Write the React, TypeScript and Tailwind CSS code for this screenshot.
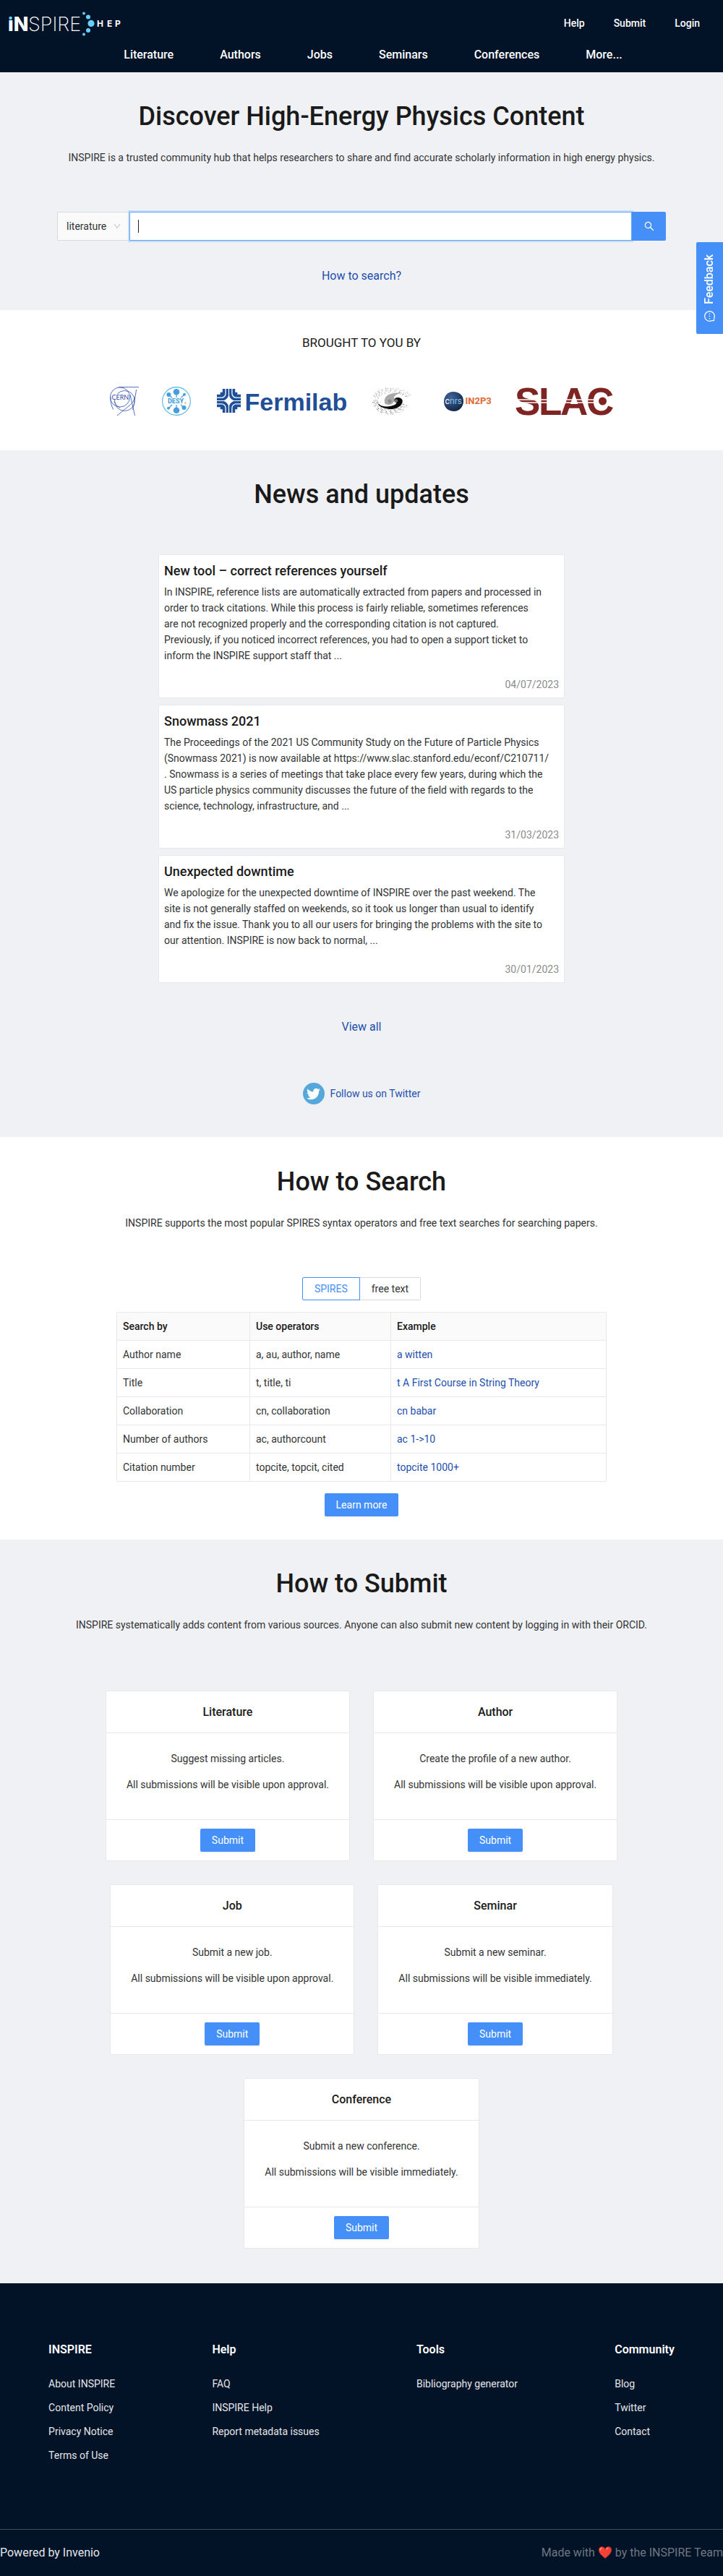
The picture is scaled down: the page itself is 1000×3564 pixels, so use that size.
import React from 'react';
import { AiOutlineDown, AiOutlineMessage, AiOutlineSearch } from 'react-icons/ai';
import { FaTwitter } from 'react-icons/fa';

const NAV = ['Literature', 'Authors', 'Jobs', 'Seminars', 'Conferences'];

const NEWS = [
  {
    title: 'New tool – correct references yourself',
    lines: [
      'In INSPIRE, reference lists are automatically extracted from papers and processed in',
      'order to track citations. While this process is fairly reliable, sometimes references',
      'are not recognized properly and the corresponding citation is not captured.',
      'Previously, if you noticed incorrect references, you had to open a support ticket to',
      'inform the INSPIRE support staff that ...',
    ],
    date: '04/07/2023',
  },
  {
    title: 'Snowmass 2021',
    lines: [
      'The Proceedings of the 2021 US Community Study on the Future of Particle Physics',
      '(Snowmass 2021) is now available at https://www.slac.stanford.edu/econf/C210711/',
      '. Snowmass is a series of meetings that take place every few years, during which the',
      'US particle physics community discusses the future of the field with regards to the',
      'science, technology, infrastructure, and ...',
    ],
    date: '31/03/2023',
  },
  {
    title: 'Unexpected downtime',
    lines: [
      'We apologize for the unexpected downtime of INSPIRE over the past weekend. The',
      'site is not generally staffed on weekends, so it took us longer than usual to identify',
      'and fix the issue. Thank you to all our users for bringing the problems with the site to',
      'our attention. INSPIRE is now back to normal, ...',
    ],
    date: '30/01/2023',
  },
];

const OPERATORS = [
  ['Author name', 'a, au, author, name', 'a witten'],
  ['Title', 't, title, ti', 't A First Course in String Theory'],
  ['Collaboration', 'cn, collaboration', 'cn babar'],
  ['Number of authors', 'ac, authorcount', 'ac 1->10'],
  ['Citation number', 'topcite, topcit, cited', 'topcite 1000+'],
];

const SUBMISSIONS = [
  { title: 'Literature', text: 'Suggest missing articles.', when: 'upon approval' },
  { title: 'Author', text: 'Create the profile of a new author.', when: 'upon approval' },
  { title: 'Job', text: 'Submit a new job.', when: 'upon approval' },
  { title: 'Seminar', text: 'Submit a new seminar.', when: 'immediately' },
  { title: 'Conference', text: 'Submit a new conference.', when: 'immediately' },
];

const FOOTER = [
  { title: 'INSPIRE', links: ['About INSPIRE', 'Content Policy', 'Privacy Notice', 'Terms of Use'] },
  { title: 'Help', links: ['FAQ', 'INSPIRE Help', 'Report metadata issues'] },
  { title: 'Tools', links: ['Bibliography generator'] },
  { title: 'Community', links: ['Blog', 'Twitter', 'Contact'] },
];

function InspireLogo() {
  return (
    <svg width="160" height="34" viewBox="0 -1 160 34" className="overflow-visible" role="img" aria-label="INSPIRE HEP">
      <g fill="#fff" fontFamily="Inter, sans-serif">
        <text x="-1" y="27" fontSize="27" fontWeight="800">iN</text>
        <text x="27" y="27" fontSize="27" fontWeight="200">SPIRE</text>
        <g fontSize="12" fontWeight="700">
          <text x="122" y="21">H</text>
          <text x="136" y="21">E</text>
          <text x="147" y="21">P</text>
        </g>
      </g>
      <rect x="-1" y="4" width="8" height="7" fill="#021227" />
      <g fill="#66cffc">
        <circle cx="2.6" cy="9" r="2.3" />
        <circle cx="104" cy="2.5" r="1.9" />
        <circle cx="110" cy="7.5" r="3" />
        <circle cx="114" cy="16.4" r="4.6" />
        <circle cx="110" cy="26" r="3" />
        <circle cx="104" cy="31.5" r="1.9" />
      </g>
    </svg>
  );
}

function CernLogo() {
  return (
    <svg width="36" height="40" viewBox="0 0 36 40" className="overflow-visible" role="img" aria-label="CERN">
      <g fill="none" stroke="#4560b4" strokeWidth="0.9">
        <circle cx="14" cy="14.5" r="13.6" />
        <circle cx="20.5" cy="19.5" r="14" />
        <path d="M12 0.6H40" />
        <path d="M1 14C0.6 21 2 26 4.6 31.5" />
        <path d="M36.6 4L33.6 22C32.5 28 32 30 31.5 32" />
        <path d="M28 11L34.5 40" />
        <path d="M10 40L27 26C32 22 34 18 33.8 14" />
        <path d="M6 20C8 25 10 27 14 29" />
      </g>
      <rect x="3" y="10" width="22" height="8" fill="#fff" />
      <text x="2.5" y="17.5" fontSize="9" fontFamily="Lato, sans-serif" fill="#2f4aa6">CERN</text>
    </svg>
  );
}

function DesyLogo() {
  return (
    <svg width="40" height="40" viewBox="0 0 40 40" role="img" aria-label="DESY">
      <circle cx="20" cy="20" r="19.4" fill="#fff" stroke="#4fb4e4" strokeWidth="1.1" />
      <path
        d="M20 8V15M9.500 11L14 15.500M31 11L26.500 15M20 32V25M9.500 29.500L14 25M30.500 29L26 25"
        stroke="#469fdc"
        strokeWidth="1.3"
      />
      <g fill="#469fdc">
        <circle cx="20" cy="7.3" r="4.3" />
        <circle cx="9.4" cy="11" r="3" />
        <circle cx="31" cy="10.7" r="2" />
        <circle cx="20" cy="32.7" r="4.3" />
        <circle cx="9" cy="29.7" r="2" />
        <circle cx="30.5" cy="29" r="3" />
        <text x="8" y="23.4" fontSize="9" fontWeight="800" fontFamily="Roboto, sans-serif">DESY</text>
      </g>
      <circle cx="32.3" cy="22.6" r="1" fill="#f08a24" />
    </svg>
  );
}

function FermilabLogo() {
  const quadrants = ['scale(1 1)', 'scale(-1 1)', 'scale(1 -1)', 'scale(-1 -1)'];
  return (
    <svg width="179" height="40" viewBox="0 0 179 40" className="overflow-visible" role="img" aria-label="Fermilab">
      <g transform="translate(16.5 19.5)">
        {quadrants.map((t) => (
          <g key={t} transform={t}>
            <path d="M-16.5 -0.6V-8.7H-11.8V-11.8H-8.7V-16.5H-0.6V-0.6Z" fill="#1f4f96" />
            <path d="M-17 -4.4H-10C-7 -4.4 -4.4 -7 -4.4 -10V-17" fill="none" stroke="#fff" strokeWidth="1.3" />
          </g>
        ))}
        <path d="M-8.5 0C-3.5 -1.5 -1.5 -3.5 0 -8.5C1.5 -3.5 3.5 -1.5 8.5 0C3.5 1.5 1.5 3.5 0 8.5C-1.5 3.5 -3.5 1.5 -8.5 0Z" fill="#fff" />
      </g>
      <text x="38.5" y="32.5" fontSize="34" fontWeight="700" fontFamily="Liberation Sans, sans-serif" fill="#1f4f96">
        Fermilab
      </text>
    </svg>
  );
}

const SPECKLES = Array.from({ length: 260 }, (_, i) => {
  const lower = i % 2 === 1;
  const t = ((i * 37) % 100) / 100;
  const spread = ((i * 53) % 29) / 29;
  const angle = lower ? Math.PI * (1.05 - t * 0.95) : Math.PI * (1.1 + t * 0.75);
  const rx = 17 + spread * 8 + (lower ? 0 : t * 9);
  const ry = 11 + spread * 8;
  return {
    x: 25 + Math.cos(angle) * rx,
    y: 20 + Math.sin(angle) * ry,
    r: 0.25 + ((i * 17) % 5) / 14,
    fill: lower || i % 3 === 0 ? '#444' : '#aaa',
  };
});

function IhepLogo() {
  return (
    <svg width="63" height="40" viewBox="0 0 63 40" role="img" aria-label="IHEP">
      {SPECKLES.map((s, i) => (
        <circle key={i} cx={s.x} cy={s.y} r={s.r} fill={s.fill} />
      ))}
      <path d="M17 22C15 12 26 7 42 9C36 9.500 31 11 30 15C32 19 29 25 23 25C19 25 17 24 17 22Z" fill="#a9a9a9" />
      <circle cx="24" cy="20" r="2.6" fill="#8a8a8a" />
      <path d="M7 23C14 29 24 28 31 25C34 23 34 22 31 21C29 17 32 14.500 36 15C41 15.500 43 19 41 23C38 30 27 33 18 30C12 28.500 9 26 7 23Z" fill="#0b0b0b" />
      <circle cx="33" cy="19.5" r="2.2" fill="#777" />
    </svg>
  );
}

function In2p3Logo() {
  return (
    <svg width="65" height="40" viewBox="0 0 65 40" className="overflow-visible" role="img" aria-label="CNRS IN2P3">
      <defs>
        <radialGradient id="cnrs" cx="35%" cy="30%" r="75%">
          <stop offset="0" stopColor="#41659a" />
          <stop offset="1" stopColor="#122548" />
        </radialGradient>
      </defs>
      <path d="M13 7C21 7 27 12 27 20C27 28 21 34 14 34C6 34 0 29 0 20.500C0 13 5 7 13 7Z" fill="url(#cnrs)" />
      <g fontFamily="Roboto, sans-serif" fontSize="12">
        <text x="1.5" y="24" fill="#fff">c</text>
        <text x="8" y="24" fill="#7fc0e8">nrs</text>
      </g>
      <text x="29.5" y="24" fontSize="13" fontWeight="700" fontFamily="Roboto, sans-serif" fill="#df6a35">IN2P3</text>
    </svg>
  );
}

function SlacLogo() {
  return (
    <svg width="134" height="40" viewBox="0 0 134 40" className="overflow-visible" role="img" aria-label="SLAC">
      <g fontFamily="Liberation Sans, sans-serif" fontSize="53" fontWeight="700" fill="#7e2422">
        <text x="-3" y="38.5">S</text>
        <text x="30" y="38.5">L</text>
        <text x="60" y="38.5">A</text>
        <text x="96" y="38.5">C</text>
      </g>
      <path d="M0 18H106M0 22H106" stroke="#fff" strokeWidth="1.3" />
      <circle cx="118.5" cy="20" r="5.5" fill="#7e2422" />
    </svg>
  );
}

function Heading({ as: Tag = 'h2', children }: { as?: 'h1' | 'h2'; children: React.ReactNode }) {
  return <Tag className="text-center text-4xl leading-[44px] font-medium text-[#1a1a1a]">{children}</Tag>;
}

function Intro({ children }: { children: React.ReactNode }) {
  return <p className="mt-6 text-center">{children}</p>;
}

const primary =
  'inline-flex h-8 items-center rounded-xs bg-[#4590f8] px-4 text-sm text-white shadow-[0_2px_0_rgba(0,0,0,0.04)]';

export default function App() {
  return (
    <div className="bg-white font-[Roboto,sans-serif] text-sm leading-[22px] text-[#333436]">
      <header className="bg-[#021227] pb-3 text-white">
        <div className="flex h-16 items-center justify-between pr-8 pl-3">
          <a href="#home">
            <InspireLogo />
          </a>
          <div className="flex gap-10 font-medium">
            <a href="#help">Help</a>
            <a href="#submit">Submit</a>
            <a href="#login">Login</a>
          </div>
        </div>
        <nav className="flex justify-center gap-16 pl-8 text-base leading-6 font-medium">
          {NAV.map((n) => (
            <a key={n} href={`#${n.toLowerCase()}`}>
              {n}
            </a>
          ))}
          <a href="#more">More...</a>
        </nav>
      </header>

      <main>
        <section className="bg-[#f0f1f5] px-4 pt-[39px] pb-[35px]">
          <Heading as="h1">Discover High-Energy Physics Content</Heading>
          <Intro>
            INSPIRE is a trusted community hub that helps researchers to share and find accurate scholarly information
            in high energy physics.
          </Intro>
          <form className="mx-auto mt-16 flex h-10 max-w-[842px]" onSubmit={(e) => e.preventDefault()}>
            <div className="relative w-[100px]">
              <select
                aria-label="Collection"
                className="h-full w-full appearance-none rounded-l-xs border border-r-0 border-[#d9d9d9] bg-[#fafafa] pl-3 outline-none"
              >
                <option>literature</option>
              </select>
              <AiOutlineDown className="pointer-events-none absolute top-[14px] right-[11px] size-3 text-[#bfbfbf]" />
            </div>
            <div className="relative z-10 flex-1">
              <input
                type="text"
                aria-label="Search"
                className="h-full w-full border border-[#5aa5f8] bg-white px-3 shadow-[0_0_0_2px_#c8dcf4] outline-none"
              />
              <span className="pointer-events-none absolute top-[11px] left-3 h-[18px] w-px bg-[#222]" />
            </div>
            <button
              type="submit"
              aria-label="Run search"
              className="z-10 flex w-[47px] items-center justify-center rounded-r-xs bg-[#4590f8] text-white"
            >
              <AiOutlineSearch className="size-4" />
            </button>
          </form>
          <p className="mt-[37px] text-center text-base leading-6">
            <a href="#how-to-search" className="text-[#1d4fae]">
              How to search?
            </a>
          </p>
        </section>

        <section className="pt-[33px] pb-12">
          <p className="text-center text-[17px] leading-6 text-[#1a1a1a]">BROUGHT TO YOU BY</p>
          <div className="mt-[49px] flex flex-wrap justify-center gap-9">
            <CernLogo />
            <DesyLogo />
            <FermilabLogo />
            <IhepLogo />
            <In2p3Logo />
            <SlacLogo />
          </div>
        </section>

        <section className="bg-[#f0f1f5] pt-[39px] pb-[45px]">
          <Heading>News and updates</Heading>
          <div className="mx-auto mt-[61px] flex max-w-[562px] flex-col gap-[9px]">
            {NEWS.map((n) => (
              <article key={n.title} className="rounded-xs border border-[#e8e8e8] bg-white px-[7px] pt-[10px] pb-[7px]">
                <h3 className="text-lg leading-6 font-medium text-[#1a1a1a]">{n.title}</h3>
                <p className="mt-[6px] whitespace-pre-line">{n.lines.join('\n')}</p>
                <p className="mt-[18px] text-right text-[#8c8c8c]">{n.date}</p>
              </article>
            ))}
          </div>
          <p className="mt-[49px] text-center text-base leading-6">
            <a href="#news" className="text-[#1d4fae]">
              View all
            </a>
          </p>
          <p className="mt-[65px] flex justify-center">
            <a href="#twitter" className="flex items-center gap-2 text-[#1d4fae]">
              <span className="flex size-[30px] items-center justify-center rounded-full bg-[#55a7dc] text-white">
                <FaTwitter className="size-[19px]" />
              </span>
              Follow us on Twitter
            </a>
          </p>
        </section>

        <section id="how-to-search" className="px-4 pt-10 pb-8">
          <Heading>How to Search</Heading>
          <Intro>
            INSPIRE supports the most popular SPIRES syntax operators and free text searches for searching papers.
          </Intro>
          <div className="mt-16 flex justify-center">
            <button type="button" className="h-8 rounded-l-xs border border-[#4590f8] px-4 text-[#4590f8]">
              SPIRES
            </button>
            <button type="button" className="h-8 rounded-r-xs border border-l-0 border-[#d9d9d9] px-4">
              free text
            </button>
          </div>
          <div className="mx-auto mt-4 max-w-[678px] overflow-hidden rounded-xs">
            <table className="w-full border-collapse text-left">
              <thead>
                <tr className="bg-[#fafafa] text-[#1a1a1a]">
                  <th className="w-[184px] border border-[#e8e8e8] p-2 font-medium">Search by</th>
                  <th className="w-[195px] border border-[#e8e8e8] p-2 font-medium">Use operators</th>
                  <th className="border border-[#e8e8e8] p-2 font-medium">Example</th>
                </tr>
              </thead>
              <tbody>
                {OPERATORS.map(([by, ops, example]) => (
                  <tr key={by}>
                    <td className="border border-[#e8e8e8] p-2">{by}</td>
                    <td className="border border-[#e8e8e8] p-2">{ops}</td>
                    <td className="border border-[#e8e8e8] p-2">
                      <a href="#example" className="text-[#1d4fae]">
                        {example}
                      </a>
                    </td>
                  </tr>
                ))}
              </tbody>
            </table>
          </div>
          <p className="mt-4 flex justify-center">
            <a href="#learn-more" className={primary}>
              Learn more
            </a>
          </p>
        </section>

        <section className="bg-[#f0f1f5] px-4 pt-[39px] pb-12">
          <Heading>How to Submit</Heading>
          <Intro>
            INSPIRE systematically adds content from various sources. Anyone can also submit new content by logging in
            with their ORCID.
          </Intro>
          <div className="mx-auto mt-20 flex max-w-[800px] flex-wrap justify-center gap-8">
            {SUBMISSIONS.map((s) => (
              <article key={s.title} className="rounded-xs border border-[#e8e8e8] bg-white text-center">
                <h3 className="border-b border-[#e8e8e8] py-4 text-base leading-[25px] font-medium text-[#1a1a1a]">
                  {s.title}
                </h3>
                <div className="px-7 pt-6 pb-[37px]">
                  <p>{s.text}</p>
                  <p className="mt-[14px]">All submissions will be visible {s.when}.</p>
                </div>
                <div className="border-t border-[#e8e8e8] py-3">
                  <a href="#submit" className={`${primary} align-top`}>
                    Submit
                  </a>
                </div>
              </article>
            ))}
          </div>
        </section>
      </main>

      <footer className="bg-[#021227] text-white">
        <div className="flex justify-around pt-20 pb-[91px]">
          {FOOTER.map((c) => (
            <div key={c.title}>
              <h4 className="text-base leading-6 font-semibold">{c.title}</h4>
              <ul className="mt-6 flex flex-col gap-[11px] text-[#e4e6e9]">
                {c.links.map((l) => (
                  <li key={l}>
                    <a href="#footer">{l}</a>
                  </li>
                ))}
              </ul>
            </div>
          ))}
        </div>
        <div className="flex justify-between border-t border-[#3f4c59] py-5 text-base leading-6">
          <a href="#invenio" className="text-[#e4e6e9]">
            Powered by Invenio
          </a>
          <span className="text-[#6f7781]">Made with ❤️ by the INSPIRE Team</span>
        </div>
      </footer>

      <button
        type="button"
        className="fixed top-[335px] right-0 z-20 flex h-[127px] w-[37px] rotate-180 items-center justify-center gap-2 rounded-r-xs bg-[#4590f8] text-base font-medium text-white [writing-mode:vertical-rl]"
      >
        <AiOutlineMessage className="size-[17px] rotate-90" />
        Feedback
      </button>
    </div>
  );
}
